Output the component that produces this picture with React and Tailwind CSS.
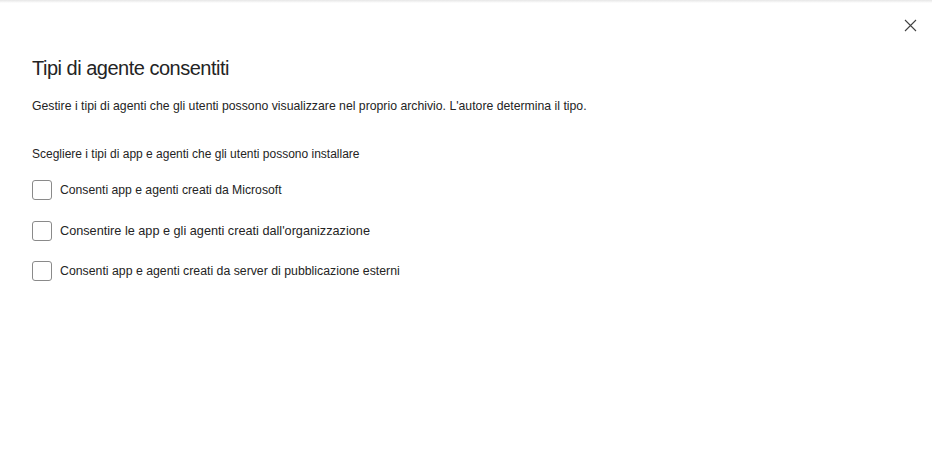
import { useState } from "react";

const options = [
  { id: "microsoft", label: "Consenti app e agenti creati da Microsoft", size: "text-[12.2px]" },
  { id: "org", label: "Consentire le app e gli agenti creati dall'organizzazione", size: "text-[12.7px]" },
  { id: "external", label: "Consenti app e agenti creati da server di pubblicazione esterni", size: "text-[12.3px]" },
];

export default function App() {
  const [checked, setChecked] = useState({});

  const toggle = (id) =>
    setChecked((prev) => ({ ...prev, [id]: !prev[id] }));

  return (
    <div className="relative w-[932px] h-[450px] bg-white text-[#242424] font-['Segoe_UI','Liberation_Sans',sans-serif] overflow-hidden">
      <div className="absolute top-0 left-0 right-0 h-[3px] bg-gradient-to-b from-[#e6e6e6] to-white" />
      <button className="absolute top-[17px] right-[14px] w-[16px] h-[16px] flex items-center justify-center text-[#424242]">
        <svg width="13" height="13" viewBox="0 0 13 13" fill="none">
          <path d="M1 1L12 12M12 1L1 12" stroke="currentColor" strokeWidth="1.1" />
        </svg>
      </button>

      <div className="pt-[55px] px-[32px]">
        <h1 className="text-[20px] leading-[26px] font-normal tracking-[-0.5px]">
          Tipi di agente consentiti
        </h1>
        <p className="mt-[17px] text-[12.25px] leading-[16px]">
          Gestire i tipi di agenti che gli utenti possono visualizzare nel proprio archivio. L'autore determina il tipo.
        </p>

        <p className="mt-[32px] text-[12px] leading-[16px]">
          Scegliere i tipi di app e agenti che gli utenti possono installare
        </p>

        <div className="mt-[18px] flex flex-col gap-[20.5px]">
          {options.map((opt) => (
            <label key={opt.id} className="flex items-center gap-[8px] cursor-pointer">
              <input
                type="checkbox"
                checked={!!checked[opt.id]}
                onChange={() => toggle(opt.id)}
                className="appearance-none w-[20px] h-[20px] rounded-[3px] border border-[#8a8a8a] bg-white checked:bg-[#0f6cbd] checked:border-[#0f6cbd]"
              />
              <span className={`${opt.size} leading-[16px]`}>{opt.label}</span>
            </label>
          ))}
        </div>
      </div>
    </div>
  );
}
